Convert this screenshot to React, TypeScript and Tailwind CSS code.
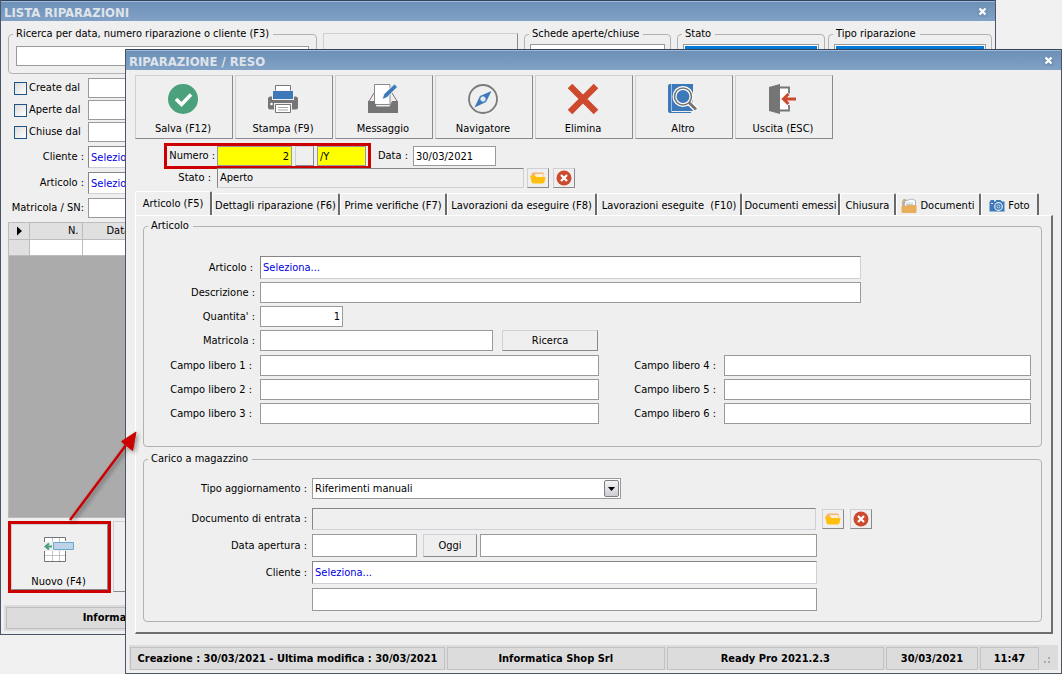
import { useState } from 'react';
import type { ReactNode } from 'react';

const flat = 'border border-[#9a9a9a] bg-white px-[2px] text-[11px] outline-none';
const sunken = 'border border-t-[#868686] border-l-[#868686] border-r-[#d0d0d8] border-b-[#d0d0d8] px-[2px] text-[11px] outline-none';
const raised = 'border border-t-[#cfcfd4] border-l-[#cfcfd4] border-r-[#8a8a8e] border-b-[#8a8a8e] bg-[#efefef]';

function SaveIcon() {
    return (
        <svg width="32" height="32" viewBox="0 0 32 32">
            <circle cx="16" cy="16" r="15" fill="#4ba17c" />
            <path d="M9 16l5.500 5.500L24 11.500" fill="none" stroke="#fff" strokeWidth="3.600" />
        </svg>
    );
}

function PrinterIcon() {
    return (
        <svg width="32" height="32" viewBox="0 0 32 32">
            <path d="M1 16q0-2.500 2.500-2.500H5V12h22v1.500h1.500Q31 13.500 31 16v8.500q0 2-2 2H3q-2 0-2-2z" fill="#757575" />
            <path d="M8.500 2.500h15v8h-15z" fill="#fff" stroke="#757575" />
            <path d="M5 7.500h22v9.500H5z" fill="#efefef" />
            <path d="M6 8h20v8H6z" fill="#3d78b8" />
            <path d="M7 20h18v9H7z" fill="#efefef" />
            <path d="M8.500 21.500h15v8h-15z" fill="#fff" stroke="#757575" />
            <path d="M11 24.500h10M11 27h10" stroke="#a5a5a5" />
            <circle cx="4.500" cy="21" r="1.300" fill="#fff" />
        </svg>
    );
}

function MessageIcon() {
    return (
        <svg width="32" height="32" viewBox="0 0 32 32">
            <path d="M1.500 19L7 10M30.500 19L25 10" stroke="#757575" fill="none" />
            <path d="M7.500 1.500h15.500v20H7.500z" fill="#fff" stroke="#8a8a8a" />
            <path d="M1 18h6l2.500 5.500h13L25 18h6v12H1z" fill="#757575" />
            <path d="M15 16.500l2-5.500L27.500 1l3 3L20 14.500z" fill="#3d78b8" stroke="#fff" strokeWidth="0.800" />
        </svg>
    );
}

function CompassIcon() {
    return (
        <svg width="32" height="32" viewBox="0 0 32 32">
            <circle cx="16" cy="16" r="14" fill="none" stroke="#7a7a7a" strokeWidth="1.800" />
            <path d="M24.500 8L19 19 7.500 24.500 13 13z" fill="#3d78b8" />
            <circle cx="16" cy="16" r="2.500" fill="#efefef" stroke="#9cc0e4" strokeWidth="0.800" />
        </svg>
    );
}

function DeleteIcon() {
    return (
        <svg width="32" height="32" viewBox="0 0 32 32">
            <path d="M3 3l26 26M29 3L3 29" stroke="#cd4a2f" strokeWidth="6.400" />
        </svg>
    );
}

function SearchBookIcon() {
    return (
        <svg width="32" height="32" viewBox="0 0 32 32">
            <path d="M1 3q0-2 2-2h23v27H4.500v1H24v1H3q-2 0-2-2z" fill="#3d78b8" />
            <path d="M4.500 1v27" stroke="#9cc0e4" />
            <circle cx="16" cy="13.500" r="8.500" fill="#3d78b8" stroke="#fff" strokeWidth="4" />
            <path d="M22 19.500l7 7" stroke="#fff" strokeWidth="5.500" />
            <circle cx="16" cy="13.500" r="8.500" fill="none" stroke="#757575" strokeWidth="1.600" />
            <path d="M22 19.500l7 7" stroke="#757575" strokeWidth="3" />
        </svg>
    );
}

function ExitIcon() {
    return (
        <svg width="32" height="32" viewBox="0 0 32 32">
            <path d="M12 4.500h10v23H12" fill="#fff" />
            <path d="M12 4.500h10v6M22 22v5.500H12" fill="none" stroke="#757575" strokeWidth="1.800" />
            <path d="M2 4L13 1v30L2 28z" fill="#757575" />
            <path d="M29 16H17M21.500 11L16.500 16l5 5" fill="none" stroke="#cd4a2f" strokeWidth="3" />
        </svg>
    );
}

function NewRowIcon() {
    return (
        <svg width="32" height="32" viewBox="0 0 32 32">
            <path d="M2 4h21v24H2z" fill="#fff" />
            <path d="M2 9.500h21M2 22.500h21M9.500 4v24M16.500 4v24" stroke="#c4c4c4" />
            <path d="M1.500 9V4.500h21V8M1.500 18v10.500h21V18" fill="none" stroke="#757575" />
            <path d="M1 9h29v9H1z" fill="#efefef" />
            <path d="M10.500 9.500h20v7h-20z" fill="#bcd3e8" stroke="#6aaac8" />
            <path d="M9 13.500H3M6 10.500l-3.500 3 3.500 3" fill="none" stroke="#4ba17c" strokeWidth="2" />
        </svg>
    );
}

function OpenIcon() {
    return (
        <svg width="16" height="16" viewBox="0 0 16 16" className="shrink-0">
            <path d="M1.500 4q0-1.500 1.500-1.500h9.500Q14 2.500 14 4v4H1.500z" fill="#f7b673" />
            <path d="M5 4h8.500v4H5z" fill="#ffeed8" />
            <path d="M0 5.500h5l1.500 1.500H15q.5 0 .5.500l-1 4.500q-.5 1.500-2 1.500H3.500Q2 13.500 1.500 12z" fill="#ffbf0f" />
        </svg>
    );
}

function ClearIcon() {
    return (
        <svg width="16" height="16" viewBox="0 0 16 16" className="shrink-0">
            <circle cx="8" cy="8" r="7.500" fill="#cd4a2f" />
            <path d="M5 5l6 6M11 5l-6 6" stroke="#fff" strokeWidth="2.200" />
        </svg>
    );
}

function DocumentsIcon() {
    return (
        <svg width="16" height="16" viewBox="0 0 16 16" className="shrink-0">
            <path d="M1 9V3.500L2.500 1H5l1 2h9v6z" fill="#c9b28c" />
            <path d="M3 8l1-5 7-2 3.500 1.500V8z" fill="#fff" stroke="#8aa0b0" strokeWidth="0.700" />
            <path d="M5 5h7M5 6.500h7" stroke="#a9bccb" strokeWidth="0.700" />
            <path d="M.5 8h5l1-1h9v7q0 1-1 1h-13q-1 0-1-1z" fill="#e8ae5c" />
        </svg>
    );
}

function CameraIcon() {
    return (
        <svg width="16" height="16" viewBox="0 0 16 16" className="shrink-0">
            <path d="M.5 3.500h1V2h3.500v1.500h1L7.500 2h4L13 3.500h2.500v10H.5z" fill="#3d78b8" />
            <circle cx="9.500" cy="8.500" r="3.800" fill="#3d78b8" stroke="#e4eef8" strokeWidth="1.200" />
            <circle cx="9.500" cy="8.500" r="1.500" fill="none" stroke="#e4eef8" strokeWidth="0.800" />
            <path d="M2 5.500h2" stroke="#e4eef8" />
        </svg>
    );
}

function TitleBar({ title }: { title: string }) {
    return (
        <div className="flex h-[21px] shrink-0 items-center justify-between border-t border-[#34435a] bg-linear-to-b from-[#6b8fb6] to-[#82a2c6] pr-[7px] pl-[3px] shadow-[inset_0_1px_0_#9dbbdc]">
            <h1 className="pt-[4px] text-[13px] leading-[18px] font-bold text-[#dfe4ea]">{title}</h1>
            <button aria-label="Chiudi" className="mt-px flex size-[11px] items-center justify-center rounded-[2px] bg-[#7393b7]">
                <svg width="9" height="9" viewBox="0 0 9 9">
                    <path d="M1.500 1.500l6 6M7.500 1.500l-6 6" stroke="#fff" strokeWidth="2.200" />
                </svg>
            </button>
        </div>
    );
}

function Group({ title, className, children }: { title: string; className: string; children?: ReactNode }) {
    return (
        <fieldset className={`min-w-0 rounded-[4px] border border-[#b2b2b2] ${className}`}>
            <legend className="ml-[4px] pr-[4px] pl-[3px] leading-[14px]">{title}</legend>
            {children}
        </fieldset>
    );
}

function IconButton({ label, children }: { label: string; children: ReactNode }) {
    return (
        <button aria-label={label} className={`flex h-[20px] w-[22px] shrink-0 items-center justify-center ${raised}`}>
            {children}
        </button>
    );
}

function FreeField({ n, labelClass }: { n: number; labelClass: string }) {
    return (
        <>
            <label htmlFor={`libero${n}`} className={`shrink-0 pr-[8px] text-right ${labelClass}`}>Campo libero {n} :</label>
            <input id={`libero${n}`} className={`h-[21px] ${n < 4 ? 'w-[339px]' : 'min-w-0 flex-1'} ${flat}`} />
        </>
    );
}

const tools = [
    { label: 'Salva (F12)', icon: <SaveIcon /> },
    { label: 'Stampa (F9)', icon: <PrinterIcon /> },
    { label: 'Messaggio', icon: <MessageIcon /> },
    { label: 'Navigatore', icon: <CompassIcon /> },
    { label: 'Elimina', icon: <DeleteIcon /> },
    { label: 'Altro', icon: <SearchBookIcon /> },
    { label: 'Uscita (ESC)', icon: <ExitIcon /> },
];

const tabs = [
    { label: 'Articolo (F5)', width: 'w-[77px]' },
    { label: 'Dettagli riparazione (F6)', width: 'w-[128px]' },
    { label: 'Prime verifiche (F7)', width: 'w-[107px]' },
    { label: 'Lavorazioni da eseguire (F8)', width: 'w-[150px]' },
    { label: 'Lavorazioni eseguite  (F10)', width: 'w-[145px]' },
    { label: 'Documenti emessi', width: 'w-[98px]' },
    { label: 'Chiusura', width: 'w-[56px]' },
    { label: 'Documenti', width: 'w-[85px]', icon: <DocumentsIcon /> },
    { label: 'Foto', width: 'w-[58px]', icon: <CameraIcon /> },
];

function ListWindow() {
    return (
        <section className="col-start-1 row-start-1 mr-[66px] mb-[39px] flex min-w-0 flex-col border-r border-b border-l border-[#4a5566] bg-[#efefef]">
            <TitleBar title="LISTA RIPARAZIONI" />
            <div className="flex h-[53px] shrink-0 gap-[6px] pt-[6px] pr-[3px] pl-[7px]">
                <Group title="Ricerca per data, numero riparazione o cliente (F3)" className="h-[47px] w-[309px] shrink-0">
                    <input aria-label="Ricerca" className={`mx-[7px] mt-[5px] block h-[20px] w-[293px] ${flat}`} />
                </Group>
                <div className="mt-[6px] w-[195px] shrink-0 border border-[#cfcfd4] border-r-[#8a8a8e]" />
                <Group title="Schede aperte/chiuse" className="h-[47px] w-[147px] shrink-0">
                    <div className="mx-[5px] mt-[3px] h-[20px] border border-[#9a9a9a] bg-white" />
                </Group>
                <div className="flex min-w-0 flex-1 gap-[3px]">
                    <Group title="Stato" className="h-[47px] w-[148px] shrink-0">
                        <div className="mx-[5px] mt-[3px] h-[20px] border border-[#9a9a9a] bg-white p-px">
                            <div className="h-full bg-[#0078d7]" />
                        </div>
                    </Group>
                    <Group title="Tipo riparazione" className="h-[47px] min-w-0 flex-1">
                        <div className="mx-[5px] mt-[3px] h-[20px] border border-[#9a9a9a] bg-white p-px">
                            <div className="h-full bg-[#0078d7]" />
                        </div>
                    </Group>
                </div>
            </div>
            <div className="mt-[4px] flex flex-col gap-[2px]">
                {['Create dal', 'Aperte dal', 'Chiuse dal'].map((label) => (
                    <div key={label} className="flex h-[20px] items-center">
                        <label className="flex w-[87px] items-center gap-[2px] pl-[13px]">
                            <input type="checkbox" className="size-[13px] appearance-none border border-[#1f5487] bg-linear-to-br from-[#dcdcdc] to-white" />
                            {label}
                        </label>
                        <input aria-label={label} className={`h-[20px] w-[100px] ${flat}`} />
                    </div>
                ))}
            </div>
            <div className="mt-[4px] flex flex-col gap-[4px]">
                <div className="flex items-center">
                    <label htmlFor="filtroCliente" className="w-[87px] pr-[4px] text-right">Cliente :</label>
                    <input id="filtroCliente" defaultValue="Seleziona..." className={`h-[22px] w-[200px] bg-white text-[#0000e6] ${sunken}`} />
                </div>
                <div className="flex items-center">
                    <label htmlFor="filtroArticolo" className="w-[87px] pr-[4px] text-right">Articolo :</label>
                    <input id="filtroArticolo" defaultValue="Seleziona..." className={`h-[22px] w-[200px] bg-white text-[#0000e6] ${sunken}`} />
                </div>
                <div className="flex items-center">
                    <label htmlFor="filtroMatricola" className="w-[87px] pr-[4px] text-right whitespace-nowrap">Matricola / SN:</label>
                    <input id="filtroMatricola" className={`h-[20px] w-[200px] ${flat}`} />
                </div>
            </div>
            <div className="mx-[7px] mt-[4px] flex-1 overflow-hidden border border-[#bcbcbc] bg-[#ababab]">
                <table className="w-full table-fixed border-collapse">
                    <thead>
                        <tr className="h-[16px] bg-[#e0e0e0]">
                            <th className="w-[20px] border-r border-b border-[#bcbcbc]">
                                <svg width="8" height="10" viewBox="0 0 8 10" className="ml-[7px]">
                                    <path d="M1 0.500L6 5 1 9.500z" fill="#000" />
                                </svg>
                            </th>
                            <th className="w-[53px] border-r border-b border-[#bcbcbc] pr-[3px] text-right leading-[14px] font-normal">N.</th>
                            <th className="w-[75px] border-r border-b border-[#bcbcbc] pl-[24px] text-left leading-[14px] font-normal">Data</th>
                            <th className="border-b border-[#bcbcbc]" />
                        </tr>
                    </thead>
                    <tbody>
                        <tr className="h-[16px] bg-white">
                            <td className="border-r border-b border-[#bcbcbc] bg-[#e0e0e0]" />
                            <td className="border-r border-b border-[#bcbcbc]" />
                            <td className="border-r border-b border-[#bcbcbc]" />
                            <td className="border-b border-[#bcbcbc]" />
                        </tr>
                    </tbody>
                </table>
            </div>
            <div className="mt-[3px] flex gap-[2px] pl-[7px]">
                <div className="border-3 border-[#cc0000]">
                    <button className={`flex h-[66px] w-[97px] flex-col items-center justify-between pt-[8px] pr-[2px] ${raised}`}>
                        <NewRowIcon />
                        <span className="leading-[14px]">Nuovo (F4)</span>
                    </button>
                </div>
                <button aria-label="Modifica" className={`h-[71px] w-[98px] ${raised}`} />
            </div>
            <footer className="mx-[3px] mt-[12px] mb-[3px] flex h-[26px] bg-[#dcdcdc] p-[2px] font-bold">
                <div className="flex w-[268px] items-center justify-center border border-[#bdbdbd]">Informatica Shop Srl</div>
            </footer>
        </section>
    );
}

function ItemGroup() {
    return (
        <Group title="Articolo" className="pr-[10px] pb-[22px]">
            <div className="flex flex-col gap-[3px] pt-[23px]">
                <div className="flex items-center">
                    <label htmlFor="articolo" className="w-[116px] pr-[7px] text-right">Articolo :</label>
                    <input id="articolo" defaultValue="Seleziona..." className={`h-[23px] w-[601px] bg-white text-[#0000e6] ${sunken}`} />
                </div>
                <div className="flex items-center">
                    <label htmlFor="descrizione" className="w-[116px] pr-[5px] text-right">Descrizione :</label>
                    <input id="descrizione" className={`h-[21px] w-[601px] ${flat}`} />
                </div>
                <div className="flex items-center">
                    <label htmlFor="quantita" className="w-[116px] pr-[5px] text-right">Quantita' :</label>
                    <input id="quantita" defaultValue="1" className={`h-[21px] w-[83px] text-right ${flat}`} />
                </div>
                <div className="mb-px flex items-center">
                    <label htmlFor="matricola" className="w-[116px] pr-[5px] text-right">Matricola :</label>
                    <input id="matricola" className={`h-[21px] w-[233px] ${flat}`} />
                    <button className={`ml-[9px] h-[21px] w-[96px] ${raised}`}>Ricerca</button>
                </div>
                {[1, 2, 3].map((n) => (
                    <div key={n} className="flex items-center">
                        <FreeField n={n} labelClass="w-[116px]" />
                        <FreeField n={n + 3} labelClass="w-[125px]" />
                    </div>
                ))}
            </div>
        </Group>
    );
}

function StockGroup() {
    return (
        <Group title="Carico a magazzino" className="mt-[5px] pb-[10px]">
            <div className="flex flex-col gap-[4px] pt-[12px]">
                <div className="mb-[5px] flex items-center">
                    <label htmlFor="tipo" className="w-[168px] pr-[5px] text-right">Tipo aggiornamento :</label>
                    <div className="relative">
                        <select id="tipo" className={`block h-[21px] w-[309px] appearance-none ${flat}`}>
                            <option>Riferimenti manuali</option>
                        </select>
                        <span className="pointer-events-none absolute top-[2px] right-[2px] flex h-[17px] w-[15px] items-center justify-center rounded-[2px] border border-[#7d7d84] bg-linear-to-b from-[#f4f4f6] to-[#cdcdd4]">
                            <svg width="7" height="4" viewBox="0 0 7 4">
                                <path d="M0 0h7L3.500 4z" fill="#000" />
                            </svg>
                        </span>
                    </div>
                </div>
                <div className="flex items-center">
                    <label htmlFor="documento" className="w-[168px] pr-[5px] text-right">Documento di entrata :</label>
                    <input id="documento" className={`mr-[6px] h-[22px] w-[504px] bg-[#efefef] ${sunken}`} />
                    <IconButton label="Apri documento"><OpenIcon /></IconButton>
                    <div className="w-[6px]" />
                    <IconButton label="Rimuovi documento"><ClearIcon /></IconButton>
                </div>
                <div className="flex items-center">
                    <label htmlFor="apertura" className="w-[168px] pr-[5px] text-right">Data apertura :</label>
                    <input id="apertura" className={`h-[23px] w-[105px] ${flat}`} />
                    <button className={`mr-[3px] ml-[6px] h-[23px] w-[54px] ${raised}`}>Oggi</button>
                    <input aria-label="Note apertura" className={`h-[23px] w-[337px] ${flat}`} />
                </div>
                <div className="flex items-center">
                    <label htmlFor="cliente" className="w-[168px] pr-[5px] text-right">Cliente :</label>
                    <input id="cliente" defaultValue="Seleziona..." className={`h-[23px] w-[505px] bg-white text-[#0000e6] ${sunken}`} />
                </div>
                <input aria-label="Dettagli cliente" className={`ml-[168px] h-[23px] w-[505px] ${flat}`} />
            </div>
        </Group>
    );
}

function RepairWindow() {
    const [active, setActive] = useState('Articolo (F5)');

    return (
        <section className="col-start-1 row-start-1 mt-[49px] ml-[125px] flex min-w-0 flex-col border-r border-b border-l border-[#4a5566] bg-[#efefef]">
            <TitleBar title="RIPARAZIONE / RESO" />
            <div className="flex flex-1 flex-col pt-[5px] pr-[8px] pl-[9px]">
                <div className="flex gap-[2px]">
                    {tools.map((tool) => (
                        <button key={tool.label} className={`flex h-[64px] w-[98px] flex-col items-center justify-between pt-[7px] pr-[2px] pb-[2px] ${raised}`}>
                            {tool.icon}
                            <span className="leading-[14px]">{tool.label}</span>
                        </button>
                    ))}
                </div>

                <div className="mt-[4px] flex items-center pl-[29px]">
                    <div className="flex items-center border-3 border-[#cc0000]">
                        <label htmlFor="numero" className="w-[50px] pr-[2px] text-right">Numero :</label>
                        <input id="numero" defaultValue="2" className="h-[20px] w-[75px] border border-[#9a9a9a] bg-[#ffff00] px-[2px] text-right text-[11px]" />
                        <button aria-label="Scegli numero" className={`mx-[3px] h-[20px] w-[19px] ${raised}`} />
                        <input aria-label="Serie" defaultValue="/Y" className="mr-[2px] h-[20px] w-[49px] border border-[#9a9a9a] bg-[#ffff00] px-[2px] text-[11px]" />
                    </div>
                    <label htmlFor="data" className="w-[42px] pr-[5px] text-right">Data :</label>
                    <input id="data" defaultValue="30/03/2021" className={`h-[20px] w-[83px] ${flat}`} />
                </div>
                <div className="-mt-px flex items-center">
                    <label htmlFor="stato" className="w-[82px] pr-[6px] text-right">Stato :</label>
                    <input id="stato" defaultValue="Aperto" className={`mr-[3px] h-[20px] w-[307px] bg-[#efefef] pb-[1px] ${sunken}`} />
                    <IconButton label="Apri stato"><OpenIcon /></IconButton>
                    <div className="w-[4px]" />
                    <IconButton label="Rimuovi stato"><ClearIcon /></IconButton>
                </div>

                <div role="tablist" className="mt-[3px] flex items-end">
                    {tabs.map((tab) => (
                        <button
                            key={tab.label}
                            role="tab"
                            aria-selected={tab.label === active}
                            onClick={() => setActive(tab.label)}
                            className={`flex shrink-0 items-center justify-center gap-[3px] rounded-t-[2px] border-t border-r-2 border-l border-t-white border-r-[#6a6a6a] border-l-white whitespace-pre ${tab.width} ${tab.label === active ? 'h-[24px]' : 'h-[22px] pt-[2px]'}`}
                        >
                            {tab.icon}
                            {tab.label}
                        </button>
                    ))}
                </div>
                <div role="tabpanel" className="flex-1 border-t border-r-2 border-b-2 border-l border-t-white border-r-[#6e6e6e] border-b-[#6e6e6e] border-l-white pt-[3px] pr-[9px] pb-[8px] pl-[7px]">
                    <ItemGroup />
                    <StockGroup />
                </div>
            </div>
            <footer className="mx-[3px] mt-[11px] mb-[3px] flex h-[25px] shrink-0 gap-[2px] bg-[#dcdcdc] pt-[2px] pr-[3px] pl-px font-bold whitespace-nowrap">
                <div className="flex w-[315px] items-center justify-center border border-[#c2c2c6]">Creazione : 30/03/2021 - Ultima modifica : 30/03/2021</div>
                <div className="flex flex-1 items-center justify-center border border-[#c2c2c6]">Informatica Shop Srl</div>
                <div className="flex flex-1 items-center justify-center border border-[#c2c2c6]">Ready Pro 2021.2.3</div>
                <div className="flex w-[92px] items-center justify-center border border-[#c2c2c6]">30/03/2021</div>
                <div className="flex w-[59px] items-center justify-center border border-[#c2c2c6]">11:47</div>
                <svg width="14" height="23" viewBox="0 0 14 23">
                    <path d="M3 14h2v2H3zM7 14h2v2H7zM7 10h2v2H7z" fill="#ababab" />
                </svg>
            </footer>
        </section>
    );
}

export default function App() {
    return (
        <main className="relative grid min-h-screen grid-cols-1 bg-[#f0f0f0] font-['DejaVu_Sans_Condensed',sans-serif] text-[11px] leading-[14px] text-black">
            <ListWindow />
            <RepairWindow />
            {/* Arrow from "Nuovo" to the repair window */}
            <svg width="84" height="104" viewBox="0 0 84 104" className="pointer-events-none absolute top-[424px] left-[62px] drop-shadow-[2px_2px_2px_rgba(0,0,0,0.4)]">
                <path d="M8 96L64 21" stroke="#cc0000" strokeWidth="2.500" />
                <path d="M74 8L59.500 17.500 70.500 26.500z" fill="#cc0000" stroke="#cc0000" />
            </svg>
        </main>
    );
}
